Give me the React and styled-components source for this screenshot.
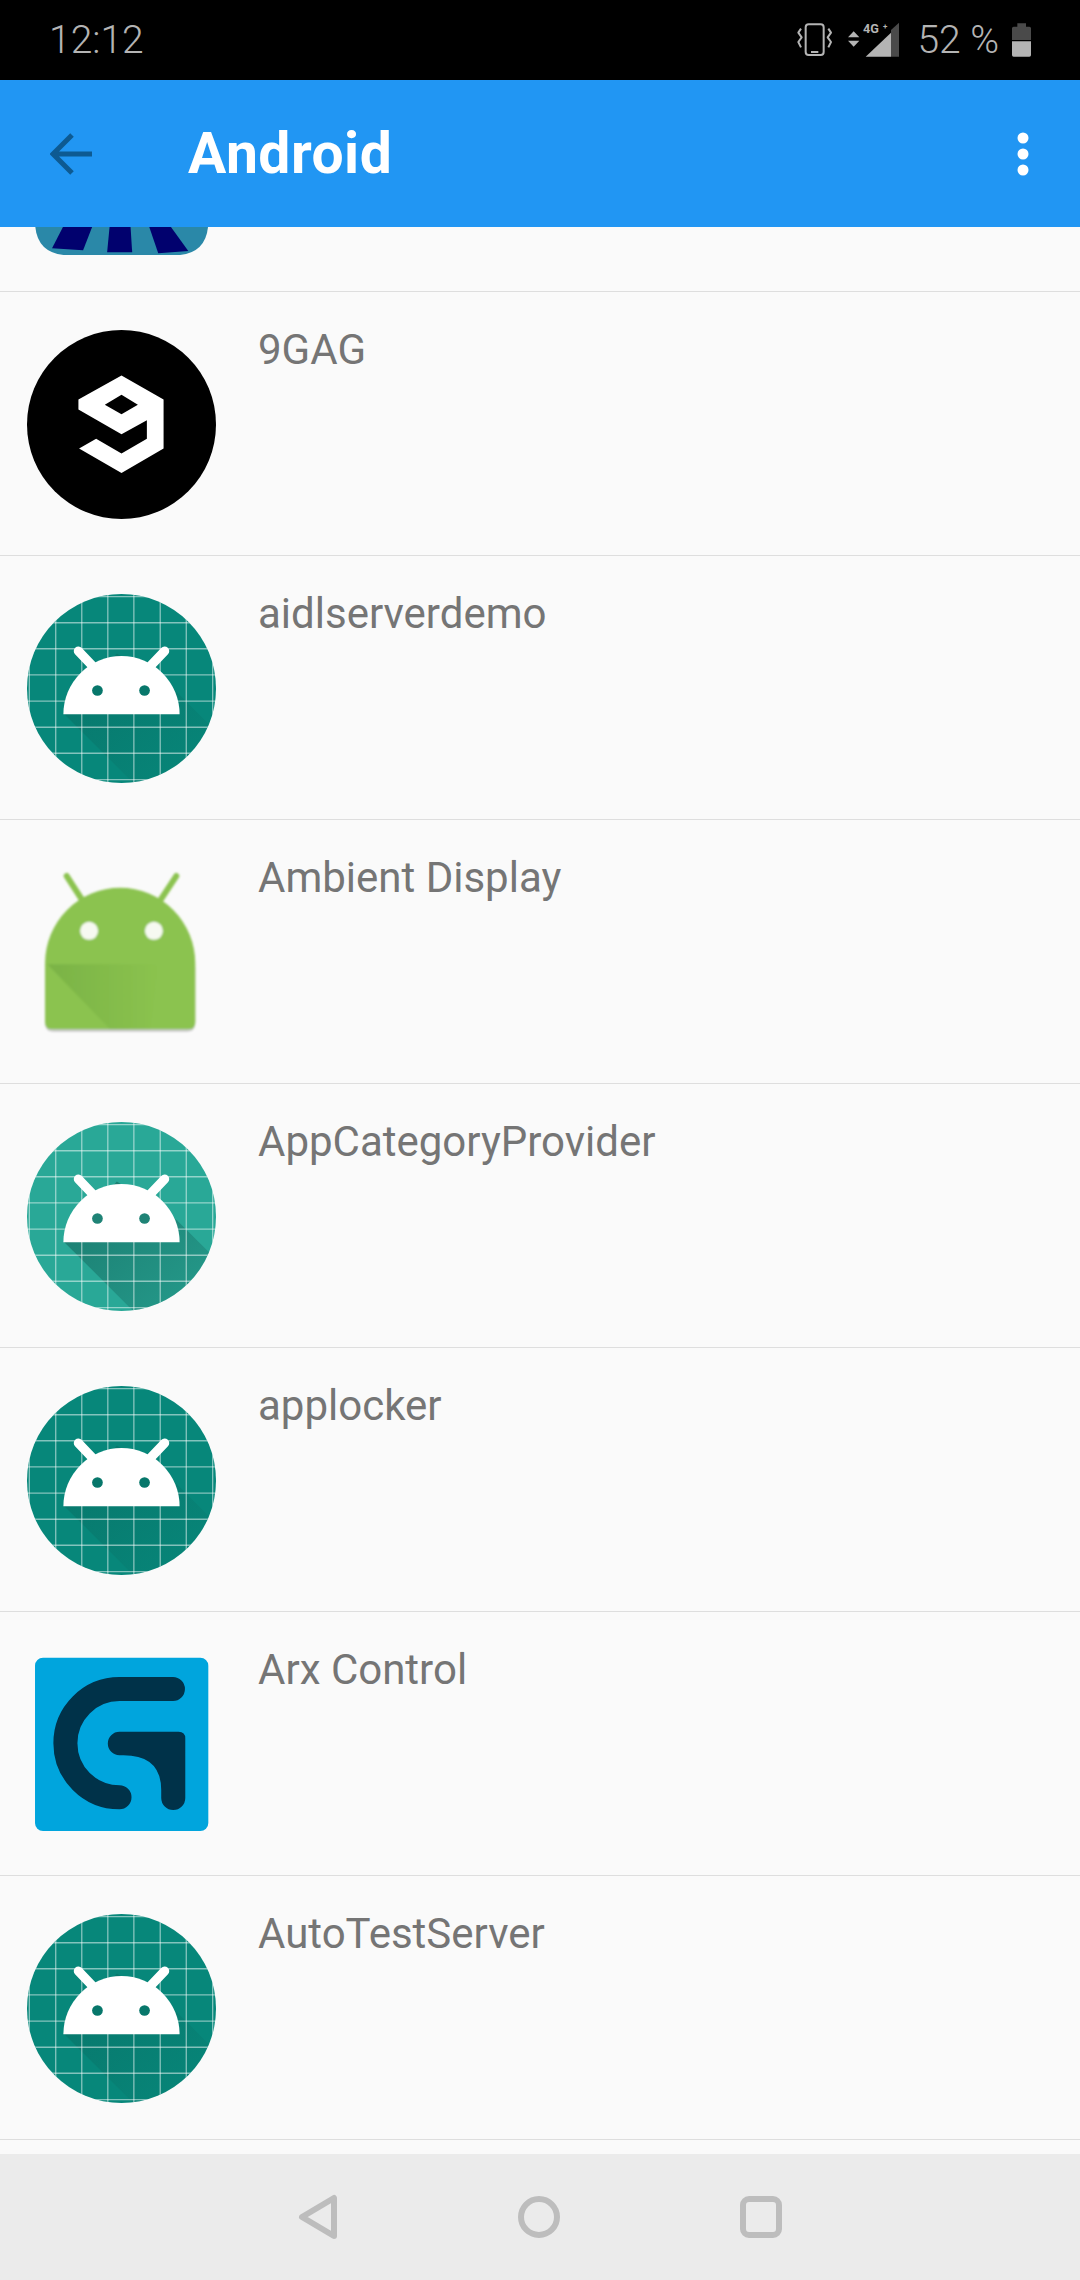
import React from 'react';
import styled, { createGlobalStyle } from 'styled-components';

const GlobalStyle = createGlobalStyle`
  html, body {
    margin: 0;
    padding: 0;
    background: #fafafa;
  }
`;

const Screen = styled.div`
  display: flex;
  flex-direction: column;
  width: 1080px;
  height: 2280px;
  overflow: hidden;
  font-family: Roboto, "Liberation Sans", sans-serif;
  background: #fafafa;
`;

const StatusBar = styled.div`
  display: flex;
  flex: none;
  align-items: center;
  justify-content: space-between;
  box-sizing: border-box;
  height: 80px;
  padding: 0 49px 0 49px;
  color: #b4b4b4;
  background: #000000;
`;

const StatusText = styled.span`
  font-size: 39px;
  font-weight: 300;
  line-height: 80px;
`;

const BatteryText = styled(StatusText)`
  margin-left: 5px;
`;

const StatusIcons = styled.div`
  display: flex;
  align-items: center;
  gap: 13px;
`;

const AppBar = styled.header`
  display: flex;
  flex: none;
  align-items: center;
  box-sizing: border-box;
  height: 147px;
  padding: 0 51px 0 50px;
  background: #2196f3;
`;

const Title = styled.h1`
  flex: 1;
  margin: 0 0 0 96px;
  font-size: 57px;
  font-weight: 700;
  letter-spacing: 0.5px;
  color: #ffffff;
`;

const List = styled.main`
  flex: 1;
  overflow: hidden;
`;

const ListInner = styled.ul`
  margin: -199px 0 0;
  padding: 0;
  list-style: none;
`;

const Row = styled.li`
  display: flex;
  box-sizing: border-box;
  height: 264px;
  padding: 38px 0 0 27px;
  border-bottom: 1px solid #dedede;
  column-gap: 42px;
`;

const IconSvg = styled.svg`
  display: block;
  flex: none;
  width: 189px;
  height: 189px;
`;

const Name = styled.span`
  font-size: 42px;
  line-height: 40px;
  color: #757575;
`;

const NavBar = styled.nav`
  display: flex;
  flex: none;
  align-items: center;
  justify-content: center;
  box-sizing: border-box;
  height: 126px;
  background: #ebebeb;
  column-gap: 180px;
`;

const GRID = [88, 167, 245, 323, 401, 480, 558, 637];
const GRID_Y = [80, 158, 236, 314, 393, 471, 549, 628];

function AndroidIcon({ id, light }) {
  const base = light ? '#29a897' : '#07877a';
  const eye = light ? '#1f8376' : '#07776b';

  return (
    <IconSvg viewBox="81 72 566 566">
      <defs>
        <clipPath id={`${id}-clip`}>
          <circle cx="364" cy="355" r="283" />
        </clipPath>
        <linearGradient id={`${id}-shade`} x1="0" y1="0" x2="1" y2="1">
          <stop offset="0" stopColor="#0b4a43" stopOpacity={light ? 0.5 : 0.28} />
          <stop offset="1" stopColor="#0b4a43" stopOpacity={light ? 0.12 : 0} />
        </linearGradient>
      </defs>
      <g clipPath={`url(#${id}-clip)`}>
        <rect x="81" y="72" width="566" height="566" fill={base} />
        <path d="M192 431 L405 644 L647 644 L647 483 L530 366 L350 250 Z" fill={`url(#${id}-shade)`} />
        <g stroke="#ffffff" strokeOpacity="0.5" strokeWidth="4">
          {GRID.map((x) => <line key={x} x1={x} x2={x} y1="72" y2="638" />)}
          {GRID_Y.map((y) => <line key={y} y1={y} y2={y} x1="81" x2="647" />)}
        </g>
      </g>
      <g stroke="#ffffff" strokeWidth="28" strokeLinecap="round">
        <line x1="235" y1="243" x2="275" y2="285" />
        <line x1="493" y1="243" x2="453" y2="285" />
      </g>
      <path d="M190 432 A174 174 0 0 1 538 432 Z" fill="#ffffff" />
      <circle cx="292" cy="361" r="16" fill={eye} />
      <circle cx="433" cy="361" r="16" fill={eye} />
    </IconSvg>
  );
}

function StripesIcon() {
  return (
    <IconSvg viewBox="81 196 566 566">
      <path d="M105 196 H624 V660 Q624 763 520 763 H210 Q105 763 105 660 Z" fill="#2a88a8" />
      <path d="M198 660 H283 L249 748 L156 742 Z" fill="#01016e" />
      <path d="M330 660 H390 L396 754 H321 Z" fill="#01016e" />
      <path d="M441 660 H499 L564 750 L474 757 Z" fill="#01016e" />
    </IconSvg>
  );
}

function NineGagIcon() {
  return (
    <IconSvg viewBox="81 90 566 566">
      <circle cx="364" cy="373" r="283" fill="#000000" />
      <path
        fillRule="evenodd"
        fill="#ffffff"
        d="M364 226 L490 298 V445 L364 518 L237 445 L288 416 L364 460 L440 416 V360 L364 402 L235 328 V298 Z M364 284 L314 314 L364 342 L413 314 Z"
      />
    </IconSvg>
  );
}

function AmbientIcon() {
  return (
    <IconSvg viewBox="81 54 566 566">
      <defs>
        <linearGradient id="ambient-fold" x1="0" y1="0" x2="1" y2="0">
          <stop offset="0" stopColor="#6fa83f" stopOpacity="0.6" />
          <stop offset="1" stopColor="#6fa83f" stopOpacity="0" />
        </linearGradient>
        <filter id="ambient-blur" x="-10%" y="-10%" width="120%" height="120%">
          <feGaussianBlur stdDeviation="2.5" />
        </filter>
      </defs>
      <g filter="url(#ambient-blur)">
        <path d="M135 380 V548 Q135 574 161 574 H559 Q585 574 585 548 V380 Z" fill="#c9c9c9" />
        <g stroke="#8bc34f" strokeWidth="18" strokeLinecap="round">
          <line x1="200" y1="108" x2="245" y2="178" />
          <line x1="528" y1="108" x2="482" y2="178" />
        </g>
        <path
          d="M135 370 A225 227 0 0 1 585 370 V545 Q585 567 563 567 H157 Q135 567 135 545 Z"
          fill="#8bc34f"
        />
        <path d="M142 372 H480 L450 567 H330 Z" fill="url(#ambient-fold)" />
        <circle cx="267" cy="272" r="27" fill="#f6f9f1" />
        <circle cx="461" cy="272" r="27" fill="#f6f9f1" />
      </g>
    </IconSvg>
  );
}

function LogitechIcon() {
  return (
    <IconSvg viewBox="81 60 566 566">
      <defs>
        <filter id="logi-blur" x="-10%" y="-10%" width="120%" height="120%">
          <feGaussianBlur stdDeviation="1.5" />
        </filter>
      </defs>
      <g filter="url(#logi-blur)">
        <rect x="105" y="83" width="519" height="519" rx="24" fill="#06a5dd" />
        <path
          d="M518 177 H358 A162 162 0 0 0 358 501"
          fill="none"
          stroke="#03304a"
          strokeWidth="72"
          strokeLinecap="round"
        />
        <path
          d="M358 305 H535 Q555 305 555 325 V503 A36 36 0 0 1 483 503 V480 Q483 375 370 375 H358 A35 35 0 0 1 358 305 Z"
          fill="#03304a"
        />
      </g>
    </IconSvg>
  );
}

const APPS = [
  { name: '', icon: <StripesIcon /> },
  { name: '9GAG', icon: <NineGagIcon /> },
  { name: 'aidlserverdemo', icon: <AndroidIcon id="aidl" /> },
  { name: 'Ambient Display', icon: <AmbientIcon /> },
  { name: 'AppCategoryProvider', icon: <AndroidIcon id="category" light /> },
  { name: 'applocker', icon: <AndroidIcon id="locker" /> },
  { name: 'Arx Control', icon: <LogitechIcon /> },
  { name: 'AutoTestServer', icon: <AndroidIcon id="autotest" /> },
];

function App() {
  return (
    <Screen>
      <GlobalStyle />
      <StatusBar>
        <StatusText>12:12</StatusText>
        <StatusIcons>
          <svg width="102" height="36" viewBox="110 68 306 108">
            <g fill="none" stroke="#b4b4b4" strokeWidth="6" strokeLinejoin="round">
              <rect x="136" y="75" width="54" height="92" rx="9" />
              <path d="M122 88 L114 100 L124 114 L114 128 L122 144" />
              <path d="M204 88 L212 100 L202 114 L212 128 L204 144" />
            </g>
            <rect x="152" y="155" width="22" height="6" fill="#b4b4b4" />
            <path d="M280 96 L297 114 H263 Z M263 124 H297 L280 142 Z" fill="#b4b4b4" />
            <text x="308" y="100" fontSize="38" fontWeight="700" fill="#b4b4b4" fontFamily="Roboto, sans-serif">4G</text>
            <text x="368" y="90" fontSize="24" fontWeight="700" fill="#b4b4b4" fontFamily="Roboto, sans-serif">+</text>
            <path d="M316 172 L392 100 V172 Z" fill="#b4b4b4" />
            <path d="M392 92 L416 70 V172 H392 Z" fill="#4a4a4a" />
          </svg>
          <BatteryText>52 %</BatteryText>
          <svg width="19" height="34" viewBox="756 70 57 100">
            <path d="M772 70 H798 V80 H808 Q813 80 813 85 V120 H756 V85 Q756 80 761 80 H772 Z" fill="#4a4a4a" />
            <path d="M756 124 H813 V165 Q813 170 808 170 H761 Q756 170 756 165 Z" fill="#b4b4b4" />
          </svg>
        </StatusIcons>
      </StatusBar>
      <AppBar>
        <svg width="42" height="46" viewBox="0 0 42 46">
          <path
            d="M42 23 H4 M22 4 L3 23 L22 42"
            fill="none"
            stroke="#0d5a92"
            strokeWidth="5"
          />
        </svg>
        <Title>Android</Title>
        <svg width="12" height="44" viewBox="0 0 12 44">
          <circle cx="6" cy="6" r="5.5" fill="#ffffff" />
          <circle cx="6" cy="22" r="5.5" fill="#ffffff" />
          <circle cx="6" cy="38" r="5.5" fill="#ffffff" />
        </svg>
      </AppBar>
      <List>
        <ListInner>
          {APPS.map((app) => (
            <Row key={app.name}>
              {app.icon}
              <Name>{app.name}</Name>
            </Row>
          ))}
        </ListInner>
      </List>
      <NavBar>
        <svg width="40" height="46" viewBox="0 0 40 46">
          <path d="M4 23 L36 4 V42 Z" fill="none" stroke="#bdbdbd" strokeWidth="6" strokeLinejoin="round" />
        </svg>
        <svg width="42" height="46" viewBox="0 0 42 46">
          <circle cx="21" cy="23" r="18" fill="none" stroke="#bdbdbd" strokeWidth="6" />
        </svg>
        <svg width="42" height="46" viewBox="0 0 42 46">
          <rect x="3" y="5" width="36" height="36" rx="6" fill="none" stroke="#bdbdbd" strokeWidth="6" />
        </svg>
      </NavBar>
    </Screen>
  );
}

export default App;
